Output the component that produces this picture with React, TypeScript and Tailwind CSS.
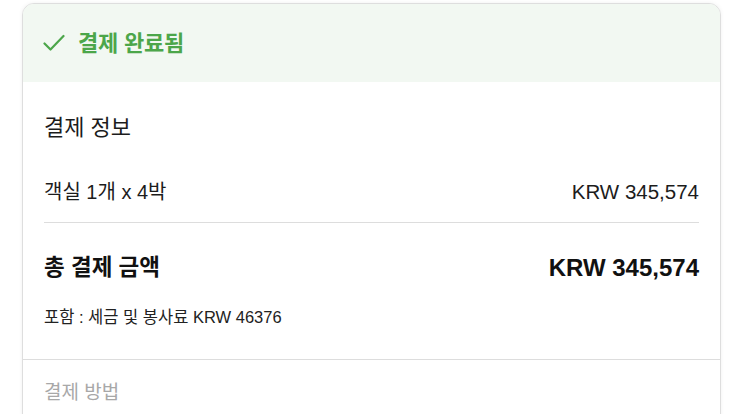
const font = "font-['Liberation_Sans','Noto_Sans_CJK_KR',sans-serif]";

const CheckIcon = () => (
  <svg width="22" height="18" viewBox="0 0 22 18" fill="none">
    <path d="M1.5 9.5 L7.5 15.5 L20.5 2" stroke="#4ca64a" strokeWidth="2.2" strokeLinecap="round" strokeLinejoin="round" />
  </svg>
);

const App = () => {
  return (
    <div className={`min-h-[414px] w-[743px] overflow-hidden bg-white ${font}`}>
      <div className="ml-[22px] mt-[3px] w-[699px] overflow-hidden rounded-[12px] border-[1.5px] border-[#dedede] bg-white shadow-[0_0_4px_rgba(0,0,0,0.06)]">
        <div className="flex h-[78px] items-center gap-[13px] bg-[#f2f8f2] pl-[20px]">
          <CheckIcon />
          <span className="text-[22px] font-bold tracking-[-0.2px] text-[#4ca64a]">결제 완료됨</span>
        </div>

        <div className="px-[21px] pb-[31px] pt-[32px]">
          <p className="text-[22px] leading-[28px] text-[#1c1c1c]">결제 정보</p>

          <div className="mt-[36px] flex items-center justify-between leading-[28px] text-[#1c1c1c]">
            <span className="text-[20px]">객실 1개 x 4박</span>
            <span className="text-[20.5px]">KRW 345,574</span>
          </div>

          <div className="mt-[16px] border-t border-[#dddddd]" />

          <div className="mt-[30px] flex items-center justify-between leading-[30px] text-[#111]">
            <span className="text-[22.5px] font-bold">총 결제 금액</span>
            <span className="text-[24px] font-bold">KRW 345,574</span>
          </div>

          <p className="mt-[23px] text-[16.5px] leading-[22px] text-[#222]">포함 : 세금 및 봉사료 KRW 46376</p>
        </div>

        <div className="border-t border-[#dddddd] px-[21px] pb-[20px] pt-[20px]">
          <p className="text-[19px] leading-[26px] text-[#a8a8a8]">결제 방법</p>
        </div>
      </div>
    </div>
  );
};

export default App;
